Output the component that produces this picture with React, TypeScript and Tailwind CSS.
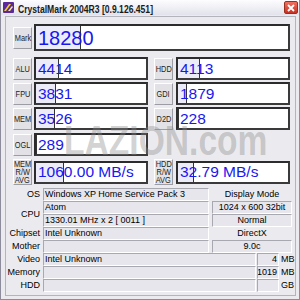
import React from "react";

const sans = "font-['Liberation_Sans',Arial,sans-serif]";

const labelBox =
  "w-[19px] shrink-0 flex flex-col items-center justify-center bg-[#e2e2e6] border border-t-white border-l-white border-b-[#9c9ca4] border-r-[#9c9ca4] text-[9px] leading-[8px] text-[#222]";

function Label({ lines, tall = false }: { lines: string[]; tall?: boolean }) {
  return (
    <div className={`${labelBox} ${tall ? "h-[26px]" : "h-[22px]"}`}>
      {lines.map((l) => (
        <span key={l} className="inline-block scale-x-[0.82] whitespace-nowrap">
          {l}
        </span>
      ))}
    </div>
  );
}

function Score({ value, mark, w, h = "h-[23px]", size = "text-[15.5px]" }: { value: string; mark: number; w: string; h?: string; size?: string }) {
  return (
    <div className={`relative ${w} ${h} shrink-0 bg-white border-2 border-[#2c2c2c] border-r-[#3a3a3a] border-b-[#3a3a3a] overflow-hidden`}>
      <div className="absolute inset-y-0 left-0 bg-[#ececf8] border-r border-[#333]" style={{ width: mark }} />
      <div className={`relative h-full flex items-center pl-[2px] ${size} leading-none text-[#1818ee]`}>{value}</div>
    </div>
  );
}

function Field({ children, w, cls = "" }: { children?: React.ReactNode; w: string; cls?: string }) {
  return (
    <div
      className={`${w} h-[13px] shrink-0 flex items-center px-[1px] border-t border-l border-t-[#a8a8b0] border-l-[#a8a8b0] border-b border-r border-b-white border-r-white bg-[#e6e6ec] text-[9px] leading-none whitespace-nowrap overflow-hidden ${cls}`}
    >
      {children}
    </div>
  );
}

function InfoLabel({ children }: { children?: React.ReactNode }) {
  return <div className="w-[35px] shrink-0 text-right pr-[1px] text-[9px] leading-none">{children}</div>;
}

export default function App() {
  return (
    <div className={`w-[300px] h-[300px] bg-[#ebebef] border-l border-r border-b border-[#8c8c9c] text-black ${sans} overflow-hidden`}>
      {/* title bar */}
      <div className="h-[15px] flex items-center bg-gradient-to-b from-[#fdfdff] to-[#e2e2ec]">
        <svg width="11" height="11" viewBox="0 0 11 11" className="ml-[2px] shrink-0">
          <rect x="0" y="0" width="11" height="11" rx="1" fill="#5a2a9c" />
          <path d="M1 9 L6 2 L8 2 L3 9 Z" fill="#f4d020" />
          <path d="M5 9 L9 4 L10 5 L7 9 Z" fill="#f8e880" />
        </svg>
        <div className="ml-[4px] w-[150px] shrink-0">
          <span className="inline-block origin-left scale-x-[0.78] whitespace-nowrap text-[11px] font-bold leading-none text-[#1a1a1a]">
            CrystalMark 2004R3 [0.9.126.451]
          </span>
        </div>
        <div className="ml-auto mr-[1px] w-[14px] h-[13px] rounded-[2px] bg-gradient-to-b from-[#f07060] to-[#c83020] border border-[#983020] flex items-center justify-center">
          <svg width="8" height="8" viewBox="0 0 8 8">
            <path d="M1 1 L7 7 M7 1 L1 7" stroke="white" strokeWidth="1.8" />
          </svg>
        </div>
      </div>

      {/* group panel */}
      <div className="relative ml-[4px] mt-[1px] w-[291px] h-[280px] border border-[#b4b4bc]">
        {/* watermark */}
        <div className="absolute left-[58px] top-[103px] z-10 origin-left scale-x-[0.8] whitespace-nowrap text-[42px] font-bold leading-none text-[#8c8c8c]/40 pointer-events-none">
          LAZION.com
        </div>

        <div className="pl-[7px] pt-[7px]">
          <div className="flex items-center gap-[2px]">
            <Label lines={["Mark"]} />
            <Score value="18280" mark={45} w="w-[256px]" h="h-[27px]" size="text-[20px]" />
          </div>

          <div className="mt-[6px] flex items-center">
            <Label lines={["ALU"]} />
            <div className="ml-[2px]"><Score value="4414" mark={23} w="w-[114px]" /></div>
            <div className="ml-[6px]"><Label lines={["HDD"]} /></div>
            <div className="ml-[3px]"><Score value="4113" mark={22} w="w-[114px]" /></div>
          </div>

          <div className="mt-[2px] flex items-center">
            <Label lines={["FPU"]} />
            <div className="ml-[2px]"><Score value="3831" mark={20} w="w-[114px]" /></div>
            <div className="ml-[6px]"><Label lines={["GDI"]} /></div>
            <div className="ml-[3px]"><Score value="1879" mark={9} w="w-[114px]" /></div>
          </div>

          <div className="mt-[2px] flex items-center">
            <Label lines={["MEM"]} />
            <div className="ml-[2px]"><Score value="3526" mark={19} w="w-[114px]" /></div>
            <div className="ml-[6px]"><Label lines={["D2D"]} /></div>
            <div className="ml-[3px]"><Score value="228" mark={1} w="w-[114px]" /></div>
          </div>

          <div className="mt-[3px] flex items-center">
            <Label lines={["OGL"]} />
            <div className="ml-[2px]"><Score value="289" mark={1} w="w-[114px]" /></div>
          </div>

          <div className="mt-[3px] flex items-center">
            <Label lines={["MEM", "R/W", "AVG"]} tall />
            <div className="ml-[2px]"><Score value="1060.00 MB/s" mark={28} w="w-[114px]" /></div>
            <div className="ml-[6px]"><Label lines={["HDD", "R/W", "AVG"]} tall /></div>
            <div className="ml-[3px]"><Score value="32.79 MB/s" mark={16} w="w-[114px]" /></div>
          </div>
        </div>

        {/* system info */}
        <div className="mt-[3px] flex flex-col">
          <div className="flex items-center h-[13px]">
            <InfoLabel>OS</InfoLabel>
            <div className="ml-[2px]"><Field w="w-[166px]">Windows XP Home Service Pack 3</Field></div>
            <div className="ml-[3px] w-[80px] text-center text-[9px] leading-none">Display Mode</div>
          </div>
          <div className="flex items-center">
            <InfoLabel>CPU</InfoLabel>
            <div className="ml-[2px] flex flex-col">
              <Field w="w-[166px]">Atom</Field>
              <Field w="w-[166px]">1330.01 MHz x 2 [ 0011 ]</Field>
            </div>
            <div className="ml-[3px] flex flex-col">
              <Field w="w-[80px]" cls="justify-center">1024 x 600 32bit</Field>
              <Field w="w-[80px]" cls="justify-center">Normal</Field>
            </div>
          </div>
          <div className="flex items-center h-[13px]">
            <InfoLabel>Chipset</InfoLabel>
            <div className="ml-[2px]"><Field w="w-[166px]">Intel Unknown</Field></div>
            <div className="ml-[3px] w-[80px] text-center text-[9px] leading-none">DirectX</div>
          </div>
          <div className="flex items-center h-[13px]">
            <InfoLabel>Mother</InfoLabel>
            <div className="ml-[2px]"><Field w="w-[166px]" /></div>
            <div className="ml-[3px]"><Field w="w-[80px]" cls="justify-center">9.0c</Field></div>
          </div>
          <div className="flex items-center h-[13px]">
            <InfoLabel>Video</InfoLabel>
            <div className="ml-[2px]"><Field w="w-[213px]">Intel Unknown</Field></div>
            <div className="ml-[1px]"><Field w="w-[22px]" cls="justify-end">4</Field></div>
            <div className="ml-[2px] text-[9px] leading-none">MB</div>
          </div>
          <div className="flex items-center h-[13px]">
            <InfoLabel>Memory</InfoLabel>
            <div className="ml-[2px]"><Field w="w-[213px]" /></div>
            <div className="ml-[1px]"><Field w="w-[22px]" cls="justify-end">1019</Field></div>
            <div className="ml-[2px] text-[9px] leading-none">MB</div>
          </div>
          <div className="flex items-center h-[13px]">
            <InfoLabel>HDD</InfoLabel>
            <div className="ml-[2px]"><Field w="w-[213px]" /></div>
            <div className="ml-[1px]"><Field w="w-[22px]" /></div>
            <div className="ml-[2px] text-[9px] leading-none">GB</div>
          </div>
        </div>
      </div>
    </div>
  );
}
